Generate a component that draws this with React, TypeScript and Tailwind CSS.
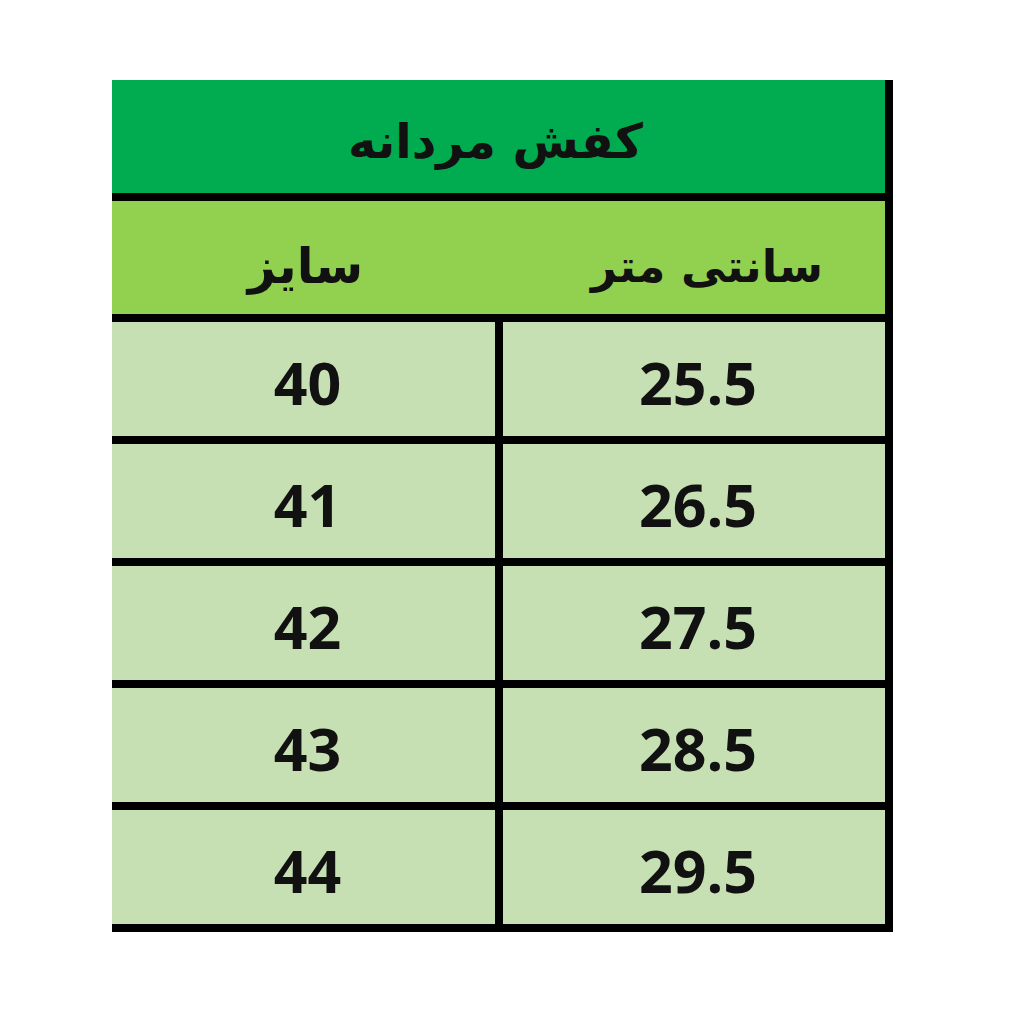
const rows = [
  { size: "40", cm: "25.5" },
  { size: "41", cm: "26.5" },
  { size: "42", cm: "27.5" },
  { size: "43", cm: "28.5" },
  { size: "44", cm: "29.5" },
];

export default function App() {
  return (
    <div className="w-[1024px] h-[1024px] bg-white pt-[80px] pl-[112px]">
      <div className="w-[781px] flex flex-col border-r-[8px] border-black text-[#111]">
        {/* title */}
        <div className="h-[121px] bg-[#00ac4f] border-b-[8px] border-black flex items-center justify-center">
          <span
            dir="rtl"
            className="text-[48px] font-bold font-['DejaVu_Sans',sans-serif] leading-none pt-[8px] pr-[6px]"
          >
            کفش مردانه
          </span>
        </div>

        {/* column titles */}
        <div className="h-[121px] bg-[#92d050] border-b-[8px] border-black flex">
          <div className="w-[391px] flex items-center justify-center pt-[18px] pr-[4px]">
            <span dir="rtl" className="text-[49px] font-bold font-['DejaVu_Sans',sans-serif] leading-none">
              سایز
            </span>
          </div>
          <div className="flex-1 flex items-center justify-center pt-[18px] pl-[26px]">
            <span dir="rtl" className="text-[45px] font-bold font-['DejaVu_Sans',sans-serif] leading-none">
              سانتی متر
            </span>
          </div>
        </div>

        {rows.map((r) => (
          <div key={r.size} className="h-[122px] bg-[#c6e0b4] border-b-[8px] border-black flex">
            <div className="w-[391px] border-r-[8px] border-black flex items-center justify-center pt-[6px] pl-[8px]">
              <span className="text-[59px] font-bold font-['Open_Sans',sans-serif] leading-none">{r.size}</span>
            </div>
            <div className="flex-1 flex items-center justify-center pt-[6px] pl-[8px]">
              <span className="text-[59px] font-bold font-['Open_Sans',sans-serif] leading-none">{r.cm}</span>
            </div>
          </div>
        ))}
      </div>
    </div>
  );
}
